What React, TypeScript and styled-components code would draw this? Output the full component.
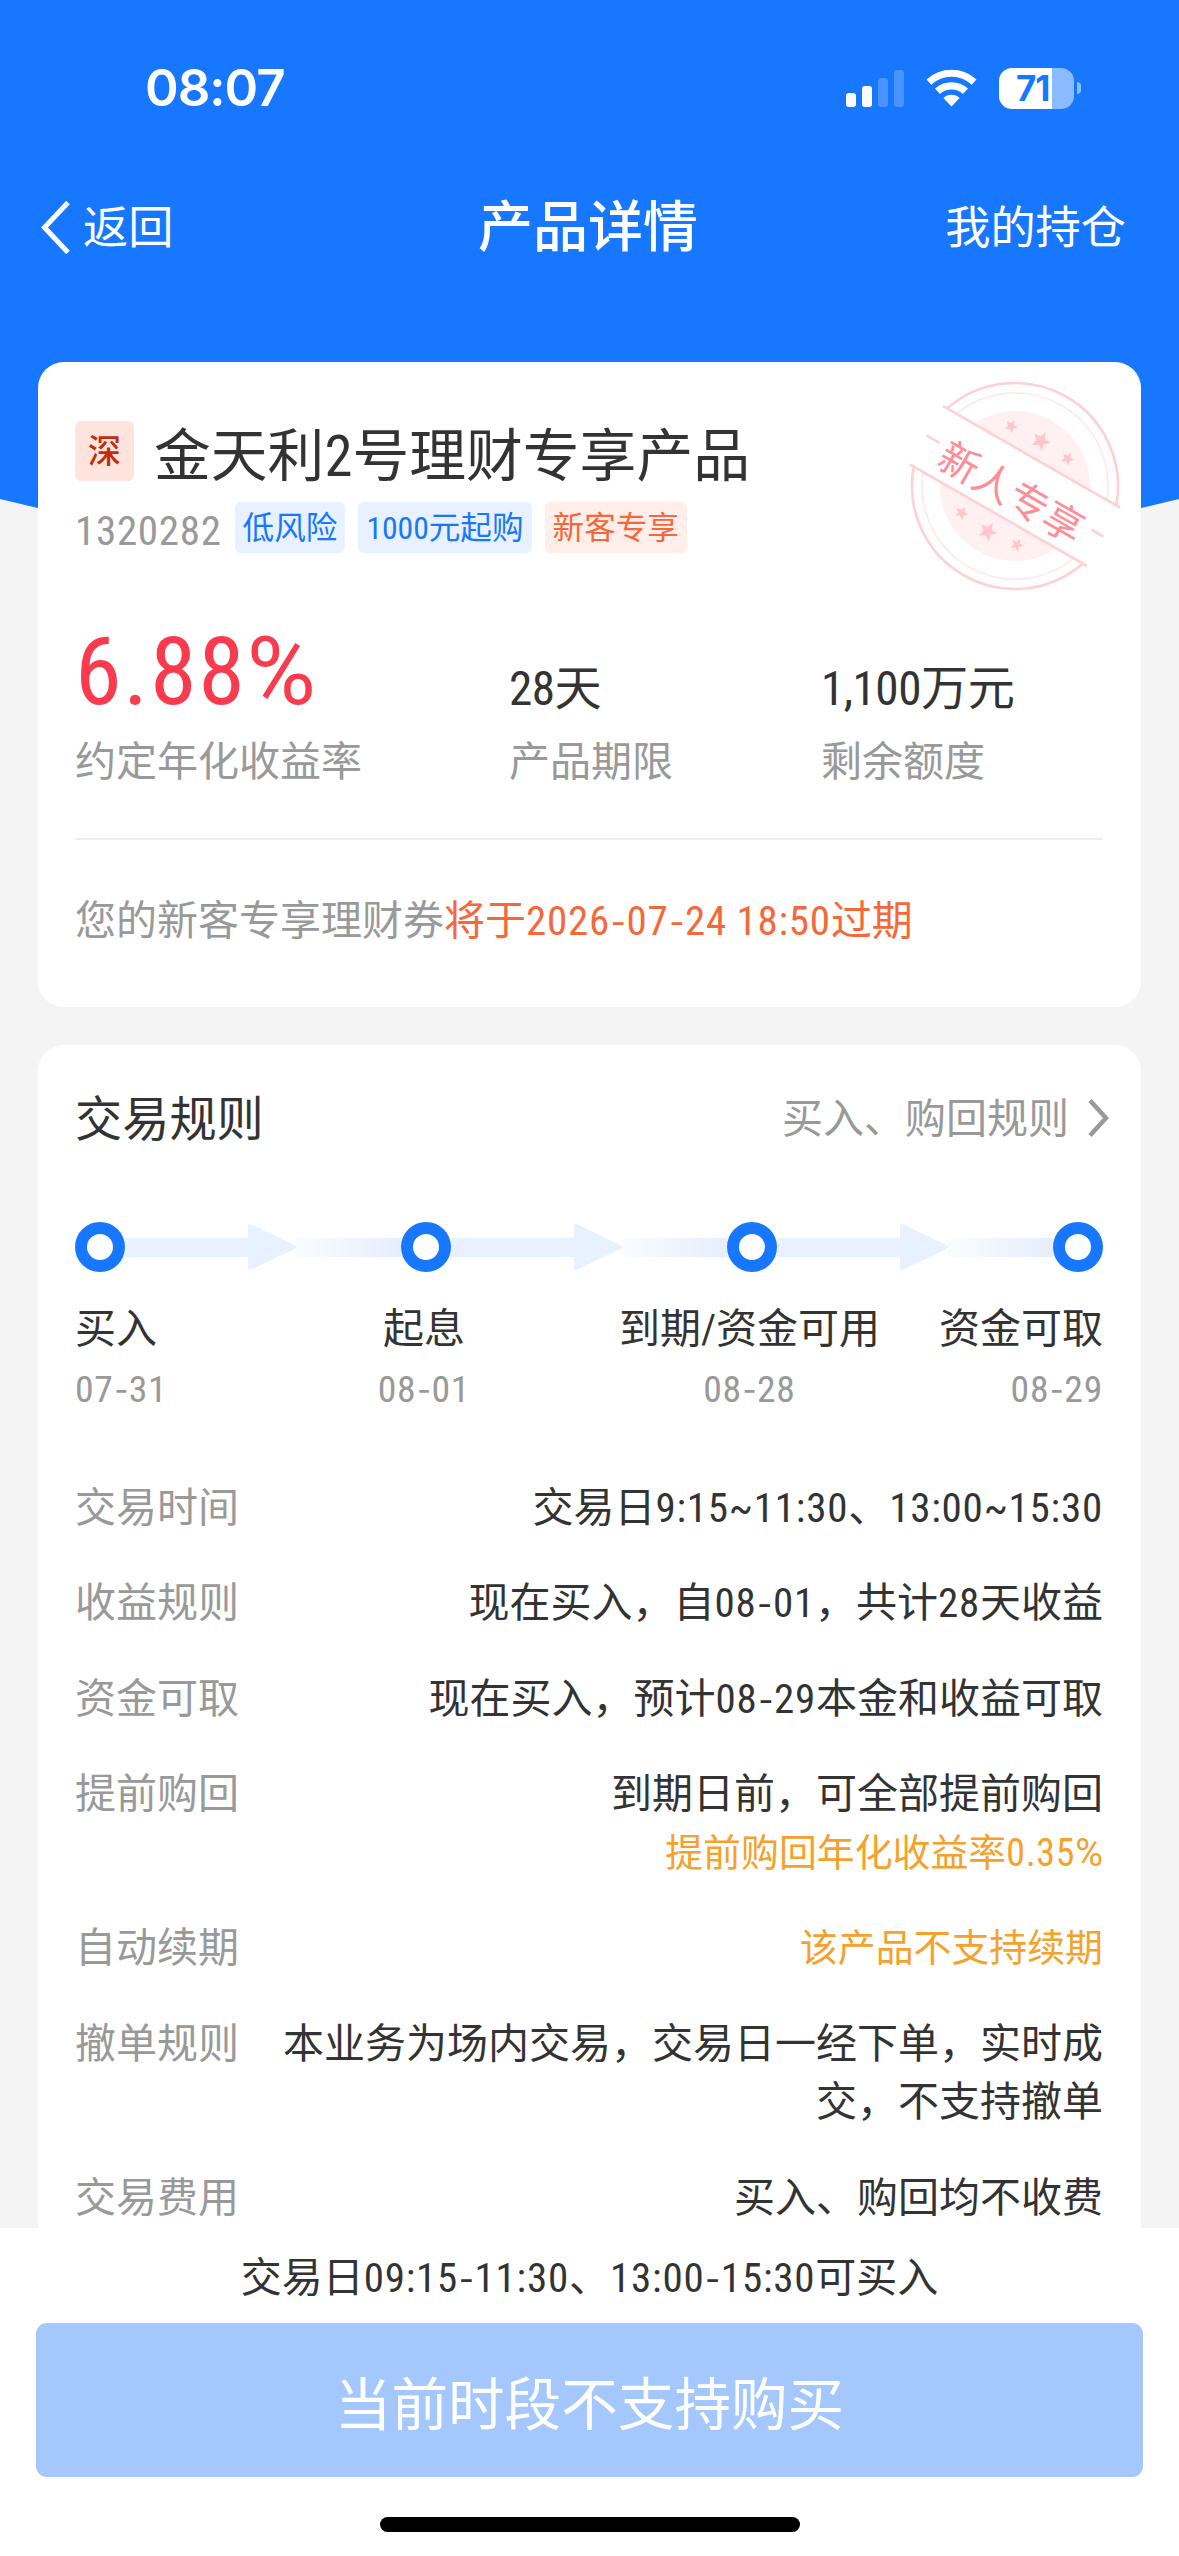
import React from 'react';
import styled, { createGlobalStyle } from 'styled-components';

const GlobalStyle = createGlobalStyle`
  * {
    box-sizing: border-box;
  }
  body {
    margin: 0;
    background: #f4f4f4;
    font-family: Roboto, 'Noto Sans CJK SC', sans-serif;
    font-stretch: 75%;
    color: #333333;
  }
`;

const Page = styled.div`
  width: 1179px;
  height: 2556px;
  display: flex;
  flex-direction: column;
  overflow: hidden;
  background: #f4f4f4;
`;

const Header = styled.header`
  flex: none;
  height: 640px;
  background: #1777ff;
  clip-path: polygon(0 0, 100% 0, 100% 499px, 50% 640px, 0 499px);
`;

const StatusBar = styled.div`
  height: 176px;
  padding: 0 98px 0 145px;
  display: flex;
  align-items: center;
  justify-content: space-between;
  color: #ffffff;

  .time {
    font: 600 51px/60px Inter, sans-serif;
    letter-spacing: -1px;
  }
  .icons {
    display: flex;
    align-items: center;
    gap: 22px;
  }
`;

const Battery = styled.div`
  display: flex;
  align-items: center;
  gap: 3px;

  .body {
    width: 75px;
    height: 41px;
    border-radius: 13px;
    background: linear-gradient(
      to right,
      #ffffff 53px,
      rgba(255, 255, 255, 0.5) 53px
    );
    color: #1777ff;
    font: 700 35px/41px Inter, sans-serif;
    letter-spacing: -1px;
    padding-left: 17px;
  }
  .cap {
    width: 4px;
    height: 12px;
    border-radius: 0 4px 4px 0;
    background: rgba(255, 255, 255, 0.5);
  }
`;

const NavBar = styled.nav`
  height: 102px;
  padding: 0 44px 0 41px;
  display: grid;
  grid-template-columns: 1fr auto 1fr;
  align-items: center;
  color: #ffffff;
  font-size: 45.2px;
  line-height: 60px;

  .back {
    display: flex;
    align-items: center;
    gap: 13px;
  }
  .back span {
    padding-top: 3px;
  }
  .title {
    font-size: 55px;
    font-weight: 500;
  }
  .right {
    padding: 3px 9px 0 0;
    text-align: right;
  }
`;

const Main = styled.main`
  flex: 1;
  min-height: 0;
  overflow: hidden;
  margin-top: -278px;
  padding: 0 38px;
  display: flex;
  flex-direction: column;
  gap: 38px;
  z-index: 1;
`;

const Card = styled.section<{ $height: number }>`
  flex: none;
  position: relative;
  height: ${({ $height }) => $height}px;
  padding: 0 38px 0 37px;
  border-radius: 26px;
  background: #ffffff;
`;

const StampWrap = styled.div`
  position: absolute;
  top: 14px;
  right: 16px;
  width: 220px;
  height: 220px;
`;

const TitleRow = styled.div`
  height: 120px;
  padding-top: 59px;
  display: flex;
  align-items: flex-start;
  gap: 20px;

  h1 {
    margin: 0;
    font-size: 56.8px;
    font-weight: 400;
    line-height: 71px;
  }
`;

const Market = styled.span`
  width: 59px;
  height: 60px;
  border-radius: 6px;
  background: #ffe4de;
  color: #c12c12;
  font-size: 33px;
  font-weight: 500;
  line-height: 61px;
  text-align: center;
`;

const TagRow = styled.div`
  height: 51px;
  margin-top: 20px;
  display: flex;
  align-items: center;
  gap: 13px;

  .code {
    color: #999999;
    font-size: 41px;
    line-height: 51px;
    letter-spacing: 0.7px;
    padding-top: 7px;
  }
`;

const Tag = styled.span<{ $hot?: boolean }>`
  height: 51px;
  padding: 0 8px;
  border-radius: 6px;
  background: ${({ $hot }) => ($hot ? '#ffeeea' : '#e7f1ff')};
  color: ${({ $hot }) => ($hot ? '#f4683a' : '#1777ff')};
  font-size: 31.6px;
  line-height: 53px;
`;

const Stats = styled.div`
  height: 287px;
  display: grid;
  grid-template-columns: 434px 312px 1fr;
  align-content: end;
  align-items: end;
  border-bottom: 2px solid #eeeeee;
  padding-bottom: 47px;
`;

const Stat = styled.div`
  .value {
    font-size: 47.2px;
    line-height: 60px;
    letter-spacing: -0.5px;
  }
  .rate {
    font-size: 94.3px;
    line-height: 94px;
    color: #f93b4d;
  }
  .label {
    margin-top: 14px;
    font-size: 41px;
    line-height: 58px;
    color: #999999;
  }
`;

const Notice = styled.p`
  margin: 52px 0 0;
  font-size: 41px;
  line-height: 58px;
  color: #999999;

  em {
    font-style: normal;
    color: #f4683a;
  }
`;

const CardHead = styled.div`
  height: 140px;
  display: flex;
  align-items: center;
  justify-content: space-between;
  margin-right: -6px;

  h2 {
    margin: 0;
    font-size: 47.2px;
    font-weight: 400;
  }
  .more {
    display: flex;
    align-items: center;
    gap: 19px;
    font-size: 41px;
    color: #999999;
  }
  .more svg {
    margin-top: 5px;
  }
`;

const Track = styled.div`
  margin-top: 37px;
  height: 50px;
  display: flex;
  align-items: center;
`;

const Dot = styled.span`
  width: 50px;
  height: 50px;
  border: 12.5px solid #1777ff;
  border-radius: 50%;
`;

const Connector = styled.span`
  flex: 1;
  display: flex;
  align-items: center;

  .bar {
    width: 123px;
    height: 19px;
    background: #e7f1ff;
  }
  .head {
    width: 48px;
    height: 48px;
    fill: #e7f1ff;
    stroke: #e7f1ff;
    stroke-width: 4;
    stroke-linejoin: round;
  }
  .tail {
    flex: 1;
    height: 19px;
    background: linear-gradient(to right, #fbfcff, #e6edfd);
  }
`;

const Steps = styled.div`
  margin-top: 27px;
  display: grid;
  grid-template-columns: 186px 326px 325px 191px;
  text-align: center;

  div:first-child {
    text-align: left;
  }
  div:last-child {
    text-align: right;
  }
  p {
    margin: 0;
    font-size: 41px;
    line-height: 60px;
    white-space: nowrap;
  }
  .date {
    font-size: 37.7px;
    color: #999999;
  }
`;

const Rules = styled.dl`
  margin: 60px 0 0;
  display: flex;
  flex-direction: column;
  gap: 36.8px;
  font-size: 41px;
  line-height: 58.6px;
`;

const Rule = styled.div`
  display: flex;
  justify-content: space-between;

  dt {
    flex: none;
    color: #999999;
  }
  dd {
    margin: 0;
    width: 826px;
    text-align: right;
  }
`;

const Warn = styled.span`
  display: block;
  font-size: 37.9px;
  color: #f5a12c;
`;

const Footer = styled.footer`
  flex: none;
  height: 328px;
  padding: 21px 36px 0;
  display: flex;
  flex-direction: column;
  align-items: center;
  background: #ffffff;
  z-index: 2;

  .hint {
    margin: 0;
    font-size: 41px;
    line-height: 58px;
  }
`;

const BuyButton = styled.button`
  width: 100%;
  height: 154px;
  margin-top: 16px;
  border: none;
  border-radius: 11px;
  background: #a4c8fe;
  color: #ffffff;
  font-family: inherit;
  font-size: 56.6px;
`;

const HomeIndicator = styled.div`
  width: 420px;
  height: 15px;
  margin-top: 40px;
  border-radius: 8px;
  background: #000000;
`;

const Digits = styled.span`
  letter-spacing: 0.019em;
`;

const Percent = styled.span`
  font-stretch: 100%;
`;

const Hyphen = styled.span`
  padding: 0 0.027em;
  font-family: 'Noto Sans CJK SC', sans-serif;
  line-height: 0;
`;

// digits are set a little looser than the text, with a wider hyphen and percent
const formatDigits = (text: string) =>
  text.split(/([\d:~.]+|-|%)/).map((part, i) => {
    if (i % 2 === 0) return part;
    if (part === '-') return <Hyphen key={i}>{part}</Hyphen>;
    if (part === '%') return <Percent key={i}>{part}</Percent>;
    return <Digits key={i}>{part}</Digits>;
  });

const SignalIcon = () => (
  <svg width="58" height="37" fill="#fff">
    <rect x="0" y="23" width="10" height="14" rx="3" />
    <rect x="16" y="16" width="10" height="21" rx="3" />
    <rect x="32" y="8" width="10" height="29" rx="3" opacity="0.22" />
    <rect x="48" y="0" width="10" height="37" rx="3" opacity="0.22" />
  </svg>
);

const WifiIcon = () => (
  <svg width="51" height="38" viewBox="-25.5 -37.5 51 38" fill="none">
    <path
      d="M-22.6-24.4A33.3 33.3 0 0 1 22.6-24.4"
      stroke="#fff"
      strokeWidth="7"
    />
    <path
      d="M-14-15.2A20.7 20.7 0 0 1 14-15.2"
      stroke="#fff"
      strokeWidth="7.3"
    />
    <path d="M0 0L-8-8.5A11.8 11.8 0 0 1 8-8.5Z" fill="#fff" />
  </svg>
);

const STAR =
  'M0-1L.26-.36L.95-.31L.42.14L.59.81L0 .45L-.59.81L-.42.14L-.95-.31L-.26-.36Z';

const stars = [
  { x: -33, y: -50, r: 7 },
  { x: 0, y: -52, r: 10 },
  { x: 32, y: -50, r: 7 },
  { x: -33, y: 50, r: 7 },
  { x: -1, y: 53, r: 10 },
  { x: 31, y: 50, r: 7 },
];

const Stamp = () => (
  <svg width="220" height="220" viewBox="-110 -110 220 220" fill="none">
    <g transform="rotate(29.8)">
      <path d="M-67.1-33.5A75 75 0 0 1 67.1-33.5Z" fill="#fff0f1" />
      <path d="M-67.1 33.5A75 75 0 0 0 67.1 33.5Z" fill="#fff0f1" />
      <g stroke="#ffe6e8" strokeWidth="1.4">
        <path d="M-86.8-33.5A93 93 0 0 1 86.8-33.5" />
        <path d="M-86.8 33.5A93 93 0 0 0 86.8 33.5" />
      </g>
      <g stroke="#ffd0d4" strokeWidth="2.6">
        <path d="M-97.4-33.5A103 103 0 0 1 97.4-33.5" />
        <path d="M-97.4 33.5A103 103 0 0 0 97.4 33.5" />
        <path d="M-102-33.5H102M-102 33.5H102M-102 0H-87M88 0H102" />
      </g>
      {stars.map((s) => (
        <path
          key={`${s.x},${s.y}`}
          d={STAR}
          fill="#ffc6cb"
          transform={`translate(${s.x} ${s.y}) scale(${s.r})`}
        />
      ))}
      <text
        x="0"
        y="22"
        textAnchor="middle"
        fontSize="40"
        fill="#ff8d98"
        fontFamily="'Noto Sans CJK SC', sans-serif"
      >
        新人专享
      </text>
    </g>
  </svg>
);

const steps = [
  { name: '买入', date: '07-31' },
  { name: '起息', date: '08-01' },
  { name: '到期/资金可用', date: '08-28' },
  { name: '资金可取', date: '08-29' },
];

const rules = [
  { name: '交易时间', text: '交易日9:15~11:30、13:00~15:30' },
  { name: '收益规则', text: '现在买入，自08-01，共计28天收益' },
  { name: '资金可取', text: '现在买入，预计08-29本金和收益可取' },
  {
    name: '提前购回',
    text: '到期日前，可全部提前购回',
    warn: '提前购回年化收益率0.35%',
  },
  { name: '自动续期', text: '', warn: '该产品不支持续期' },
  {
    name: '撤单规则',
    text: '本业务为场内交易，交易日一经下单，实时成交，不支持撤单',
  },
  { name: '交易费用', text: '买入、购回均不收费' },
];

export default function App() {
  return (
    <Page lang="zh-CN">
      <GlobalStyle />
      <Header>
        <StatusBar>
          <span className="time">08:07</span>
          <div className="icons">
            <SignalIcon />
            <WifiIcon />
            <Battery>
              <div className="body">71</div>
              <div className="cap" />
            </Battery>
          </div>
        </StatusBar>
        <NavBar>
          <div className="back">
            <svg width="29" height="53" fill="none" stroke="#fff">
              <path d="M27 1.5L3.5 26.5L27 51.5" strokeWidth="5" />
            </svg>
            <span>返回</span>
          </div>
          <div className="title">产品详情</div>
          <div className="right">我的持仓</div>
        </NavBar>
      </Header>
      <Main>
        <Card $height={645}>
          <TitleRow>
            <Market>深</Market>
            <h1>金天利2号理财专享产品</h1>
          </TitleRow>
          <TagRow>
            <span className="code">1320282</span>
            <Tag>低风险</Tag>
            <Tag>1000元起购</Tag>
            <Tag $hot>新客专享</Tag>
          </TagRow>
          <Stats>
            <Stat>
              <div className="rate">{formatDigits('6.88%')}</div>
              <div className="label">约定年化收益率</div>
            </Stat>
            <Stat>
              <div className="value">28天</div>
              <div className="label">产品期限</div>
            </Stat>
            <Stat>
              <div className="value">1,100万元</div>
              <div className="label">剩余额度</div>
            </Stat>
          </Stats>
          <Notice>
            您的新客专享理财券
            <em>{formatDigits('将于2026-07-24 18:50过期')}</em>
          </Notice>
          <StampWrap>
            <Stamp />
          </StampWrap>
        </Card>
        <Card $height={1260}>
          <CardHead>
            <h2>交易规则</h2>
            <div className="more">
              买入、购回规则
              <svg width="21" height="38" fill="none" stroke="#999">
                <path d="M2 1.5L18 19L2 36.5" strokeWidth="4.5" />
              </svg>
            </div>
          </CardHead>
          <Track>
            {steps.map((step, i) => (
              <React.Fragment key={step.name}>
                {i > 0 && (
                  <Connector>
                    <span className="bar" />
                    <svg className="head" viewBox="0 0 48 48">
                      <path d="M2 3L46 24L2 45Z" />
                    </svg>
                    <span className="tail" />
                  </Connector>
                )}
                <Dot />
              </React.Fragment>
            ))}
          </Track>
          <Steps>
            {steps.map((step) => (
              <div key={step.name}>
                <p>{step.name}</p>
                <p className="date">{formatDigits(step.date)}</p>
              </div>
            ))}
          </Steps>
          <Rules>
            {rules.map((rule) => (
              <Rule key={rule.name}>
                <dt>{rule.name}</dt>
                <dd>
                  {formatDigits(rule.text)}
                  {rule.warn && <Warn>{formatDigits(rule.warn)}</Warn>}
                </dd>
              </Rule>
            ))}
          </Rules>
        </Card>
      </Main>
      <Footer>
        <p className="hint">
          {formatDigits('交易日09:15-11:30、13:00-15:30可买入')}
        </p>
        <BuyButton>当前时段不支持购买</BuyButton>
        <HomeIndicator />
      </Footer>
    </Page>
  );
}
